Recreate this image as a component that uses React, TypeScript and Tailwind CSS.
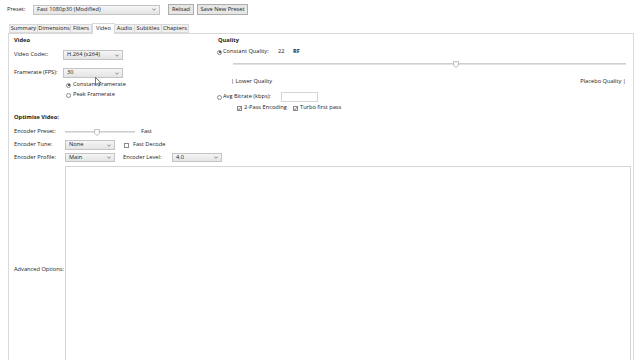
import React from "react";

const Chevron = () => (
  <svg width="4" height="3" viewBox="0 0 4 3" className="shrink-0">
    <path d="M0.3 0.5 L2 2.3 L3.7 0.5" fill="none" stroke="#606060" strokeWidth="0.7" />
  </svg>
);

const Combo = ({ value, className }: { value: string; className: string }) => (
  <div
    className={`h-full border border-[#c4c4c4] bg-gradient-to-b from-[#f5f5f5] to-[#e4e4e4] flex items-center justify-between pl-[3px] pr-[3px] ${className}`}
  >
    <span>{value}</span>
    <Chevron />
  </div>
);

const Radio = ({ checked }: { checked?: boolean }) => (
  <div className="w-[5px] h-[5px] rounded-full border border-[#8a8a8a] bg-white flex items-center justify-center shrink-0">
    {checked && <div className="w-[2px] h-[2px] rounded-full bg-[#333]" />}
  </div>
);

const Check = ({ checked }: { checked?: boolean }) => (
  <div className="w-[5px] h-[5px] border border-[#8a8a8a] bg-white shrink-0 relative">
    {checked && (
      <svg width="5" height="5" viewBox="0 0 5 5" className="absolute -left-px -top-px">
        <path d="M1 2.6 L2.1 3.7 L4 1.2" fill="none" stroke="#444" strokeWidth="0.7" />
      </svg>
    )}
  </div>
);

const Thumb = () => (
  <svg width="6" height="7" viewBox="0 0 6 7">
    <path d="M0.5 0.5 H5.5 V4.3 L3 6.5 L0.5 4.3 Z" fill="#fafafa" stroke="#9a9a9a" strokeWidth="0.6" />
  </svg>
);

const tabs = [
  { name: "Summary", w: "w-[29px]" },
  { name: "Dimensions", w: "w-[34px]" },
  { name: "Filters", w: "w-[22px]" },
  { name: "Video", w: "w-[23px]", active: true },
  { name: "Audio", w: "w-[21px]" },
  { name: "Subtitles", w: "w-[28px]" },
  { name: "Chapters", w: "w-[28px]" },
];

export default function App() {
  return (
    <div className="w-[640px] h-[360px] overflow-hidden bg-white text-[#1a1a1a] text-[5.7px] leading-none font-['Open_Sans',sans-serif] flex flex-col relative">
      {/* preset bar */}
      <div className="h-[19px] flex items-center pl-[7px] shrink-0">
        <span className="w-[26px]">Preset:</span>
        <div className="h-[10px] w-[127px] flex">
          <Combo value="Fast 1080p30  (Modified)" className="w-full" />
        </div>
        <div className="ml-[8px] h-[11px] w-[26px] border border-[#adadad] bg-[#e6e6e6] flex items-center justify-center">
          Reload
        </div>
        <div className="ml-[3px] h-[11px] w-[51px] border border-[#adadad] bg-[#e6e6e6] flex items-center justify-center">
          Save New Preset
        </div>
      </div>

      {/* tabs */}
      <div className="mt-[4px] h-[10px] flex items-end pl-[9px] shrink-0">
        {tabs.map((t) =>
          t.active ? (
            <div
              key={t.name}
              className={`${t.w} h-[11px] -mb-px bg-white border border-b-0 border-[#d9d9d9] relative z-10 flex items-center justify-center`}
            >
              {t.name}
            </div>
          ) : (
            <div
              key={t.name}
              className={`${t.w} h-[9px] bg-[#f0f0f0] border border-[#d9d9d9] -ml-px first:ml-0 flex items-center justify-center`}
            >
              {t.name}
            </div>
          )
        )}
      </div>

      {/* panel */}
      <div className="ml-[8px] w-[626px] flex-1 border border-[#d9d9d9] pl-[5px] pt-[2px] flex flex-col">
        <div className="h-[77px] flex shrink-0">
          {/* video */}
          <div className="w-[203px] flex flex-col">
            <div className="h-[10px] flex items-center font-bold">Video</div>
            <div className="mt-[4px] h-[10px] flex items-center">
              <span className="w-[49px]">Video Codec:</span>
              <Combo value="H.264 (x264)" className="w-[60px]" />
            </div>
            <div className="mt-[8px] h-[10px] flex items-center">
              <span className="w-[49px]">Framerate (FPS):</span>
              <Combo value="30" className="w-[60px]" />
            </div>
            <div className="mt-[3px] h-[8px] flex items-center pl-[52px] gap-[2px]">
              <Radio checked />
              <span>Constant Framerate</span>
            </div>
            <div className="mt-[2px] h-[8px] flex items-center pl-[52px] gap-[2px]">
              <Radio />
              <span>Peak Framerate</span>
            </div>
          </div>

          {/* quality */}
          <div className="flex-1 flex flex-col pr-[7px]">
            <div className="h-[10px] flex items-center font-bold pl-px">Quality</div>
            <div className="mt-px h-[10px] flex items-center">
              <Radio checked />
              <span className="ml-px w-[55px]">Constant Quality:</span>
              <span className="w-[15px]">22</span>
              <span className="font-bold">RF</span>
            </div>
            <div className="mt-[3px] h-[8px] ml-[16px] relative flex items-center">
              <div className="w-full h-[2px] bg-[#e2e2e2] border-t border-[#d0d0d0]" />
              <div className="absolute left-[220px] top-px">
                <Thumb />
              </div>
            </div>
            <div className="mt-[10px] h-[8px] flex items-center justify-between pl-[14px]">
              <span>| Lower Quality</span>
              <span>Placebo Quality |</span>
            </div>
            <div className="mt-[6px] h-[10px] flex items-center">
              <Radio />
              <span className="ml-px w-[58px]">Avg Bitrate (kbps):</span>
              <div className="w-[37px] h-full border border-[#d5d5d5] bg-white" />
            </div>
            <div className="mt-[2px] h-[8px] flex items-center pl-[20px]">
              <Check checked />
              <span className="ml-[2px] w-[49px]">2-Pass Encoding</span>
              <Check checked />
              <span className="ml-[2px]">Turbo first pass</span>
            </div>
          </div>
        </div>

        {/* optimise */}
        <div className="h-[10px] flex items-center font-bold shrink-0">Optimise Video:</div>
        <div className="mt-[5px] h-[8px] flex items-center shrink-0">
          <span className="w-[51px]">Encoder Preset:</span>
          <div className="w-[70px] h-full relative flex items-center">
            <div className="w-full h-[2px] bg-[#e2e2e2] border-t border-[#d0d0d0]" />
            <div className="absolute left-[29px] top-px">
              <Thumb />
            </div>
          </div>
          <span className="ml-[6px]">Fast</span>
        </div>
        <div className="mt-[4px] h-[10px] flex items-center shrink-0">
          <span className="w-[51px]">Encoder Tune:</span>
          <Combo value="None" className="w-[50px]" />
          <div className="ml-[9px]">
            <Check />
          </div>
          <span className="ml-[4px]">Fast Decode</span>
        </div>
        <div className="mt-[3px] h-[9px] flex items-center shrink-0">
          <span className="w-[51px]">Encoder Profile:</span>
          <Combo value="Main" className="w-[50px]" />
          <span className="ml-[8px] w-[49px]">Encoder Level:</span>
          <Combo value="4.0" className="w-[50px]" />
        </div>
        <div className="mt-[4px] h-[208px] flex items-center shrink-0">
          <span className="w-[51px]">Advanced Options:</span>
          <div className="w-[566px] h-full border border-[#d5d5d5] bg-white" />
        </div>
      </div>

      {/* mouse cursor */}
      <svg width="7" height="10" viewBox="0 0 7 10" className="absolute left-[95px] top-[77px]">
        <path d="M0.5 0.5 V8 L2.3 6.3 L3.6 9.2 L4.8 8.7 L3.6 5.9 L6 5.9 Z" fill="#fff" stroke="#222" strokeWidth="0.6" />
      </svg>
    </div>
  );
}
